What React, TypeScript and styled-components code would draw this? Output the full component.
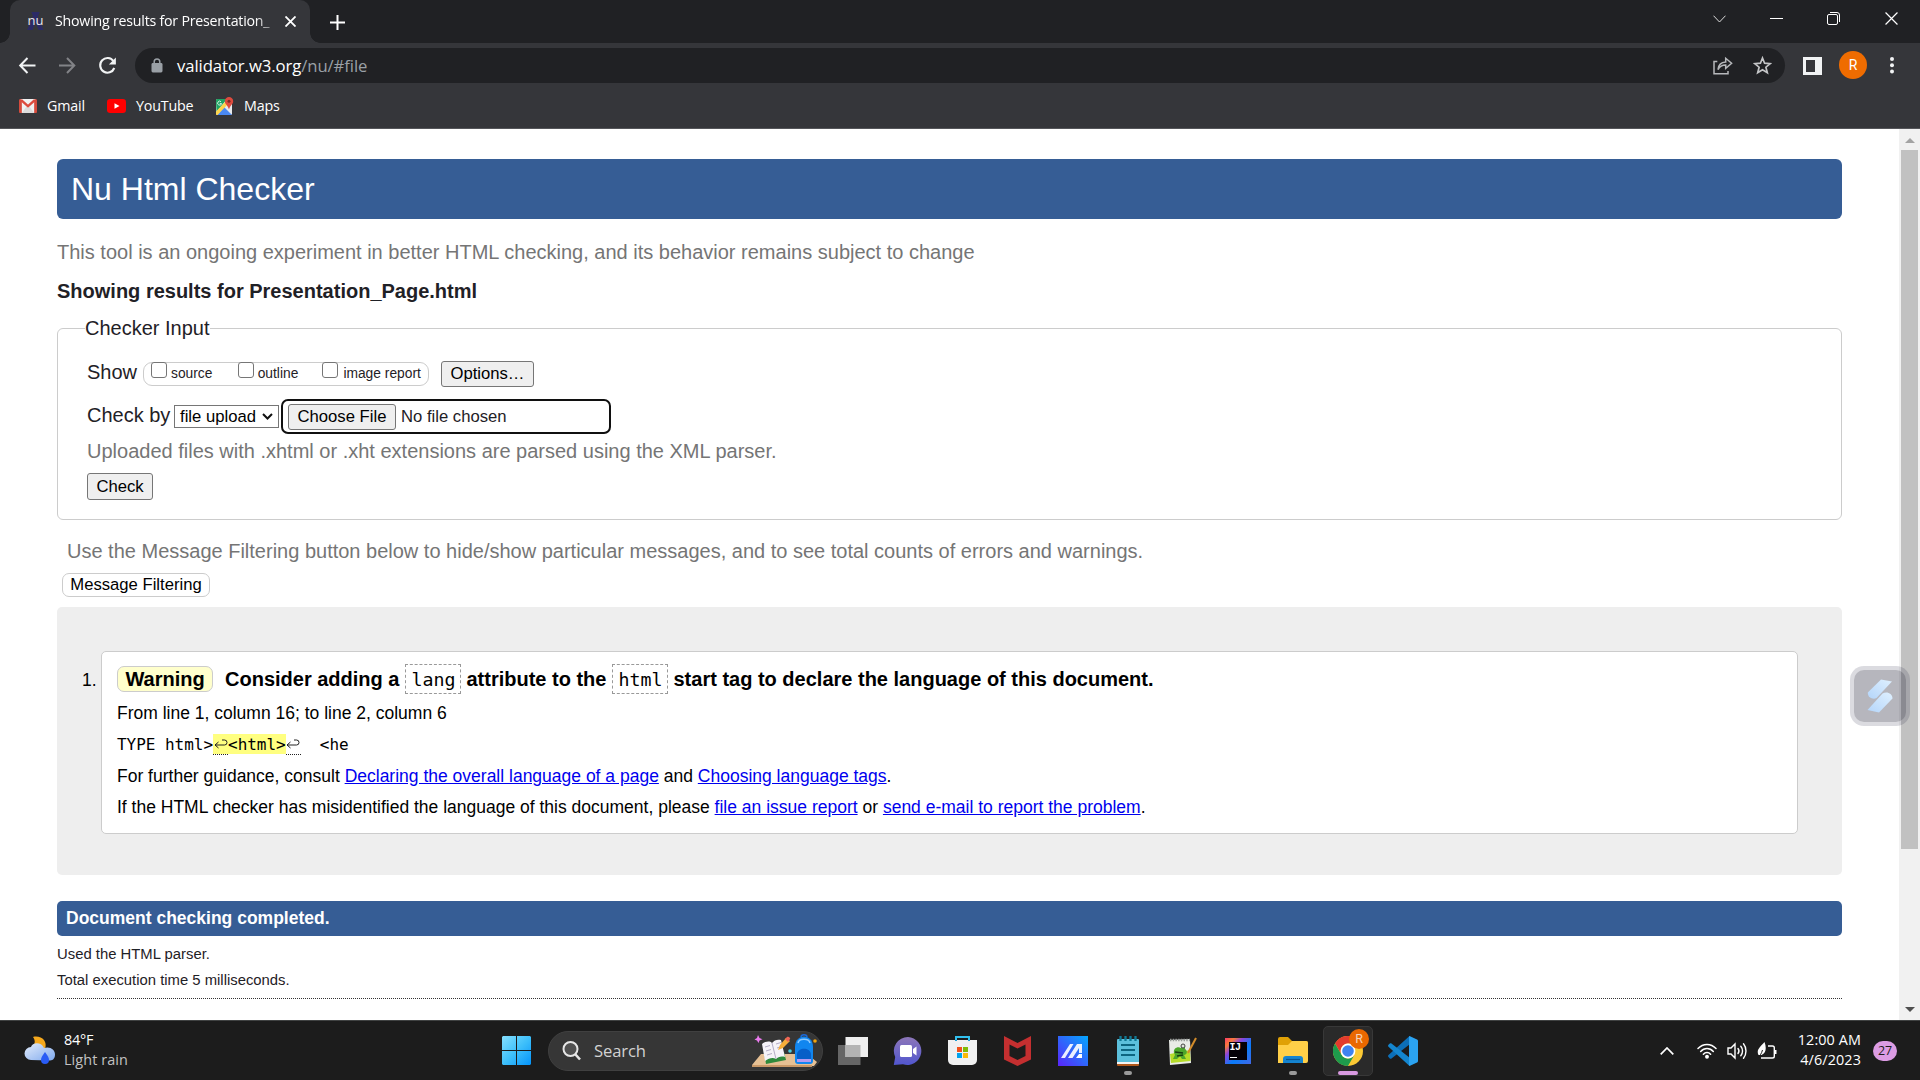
import React from "react";
import styled, { createGlobalStyle } from "styled-components";

const sans = `"Liberation Sans", Arial, sans-serif`;
const ui = `"Open Sans", "Noto Sans", sans-serif`;
const mono = `"DejaVu Sans Mono", "Liberation Mono", monospace`;

const Global = createGlobalStyle`
  * { box-sizing: border-box; }
  html, body { margin: 0; padding: 0; background: #fff; overflow: hidden; }
  svg { display: block; flex: none; }
`;

const Screen = styled.div`
  width: 1920px;
  height: 1080px;
  display: flex;
  flex-direction: column;
  overflow: hidden;
  font-family: ${sans};
`;

/* ---------- browser chrome ---------- */
const TabStrip = styled.div`
  height: 43px;
  background: #202124;
  display: flex;
  justify-content: space-between;
`;
const TabGroup = styled.div`
  display: flex;
  align-items: flex-end;
`;
const TabCurve = styled.div<{ $side: "left" | "right" }>`
  width: 10px;
  height: 10px;
  background: radial-gradient(circle at ${(p) => (p.$side === "left" ? "0 0" : "100% 0")}, #202124 9.5px, #35363a 10px);
`;
const Tab = styled.div`
  width: 300px;
  height: 43px;
  padding: 0 11px 1px 16px;
  border-radius: 10px 10px 0 0;
  background: #35363a;
  display: flex;
  align-items: center;
`;
const Favicon = styled.span`
  width: 19px;
  height: 18px;
  background: linear-gradient(112deg, transparent 30%, #2b2a66 34% 50%, transparent 54%),
    linear-gradient(68deg, transparent 46%, #2b2a66 50% 64%, transparent 68%);
  color: #e8e8e8;
  font: 500 13px/17px ${ui};
  text-align: center;
`;
const TabTitle = styled.span`
  flex: 1;
  margin-left: 10px;
  white-space: nowrap;
  color: #fff;
  font: 14.2px/20px ${ui};
  letter-spacing: -0.22px;
  mask-image: linear-gradient(90deg, #000 200px, transparent 228px);
`;
const NewTab = styled.div`
  width: 35px;
  height: 42px;
  display: grid;
  place-items: center;
`;
const WindowButtons = styled.div`
  display: flex;
  height: 37px;
`;
const WindowButton = styled.div<{ $w?: number }>`
  width: ${(p) => p.$w ?? 57}px;
  display: grid;
  place-items: center;
`;
const Toolbar = styled.div`
  height: 45px;
  background: #35363a;
  display: flex;
  align-items: center;
  padding-left: 7px;
`;
const NavButton = styled.div<{ $w?: number }>`
  width: ${(p) => p.$w ?? 40}px;
  height: 40px;
  display: grid;
  place-items: center;
`;
const Omnibox = styled.div`
  width: 1650px;
  height: 35px;
  margin-left: 8px;
  border-radius: 18px;
  background: #202124;
  display: flex;
  align-items: center;
  padding: 0 13px 0 16px;
`;
const Url = styled.span`
  flex: 1;
  margin-left: 14px;
  color: #9aa0a6;
  font: 16.7px/24px ${ui};
  letter-spacing: -0.08px;
`;
const UrlHost = styled.span`
  color: #fff;
`;
const OmniActions = styled.div`
  display: flex;
  gap: 20px;
`;
const Avatar = styled.div`
  width: 28px;
  height: 28px;
  margin: 0 6px 1px 0;
  border-radius: 50%;
  background: #ef6c00;
  color: #fff;
  font: 14px/28px Roboto, sans-serif;
  text-align: center;
`;
const Bookmarks = styled.div`
  height: 41px;
  padding: 0 0 5px 19px;
  background: #35363a;
  border-bottom: 1px solid #55565a;
  display: flex;
  align-items: center;
`;
const Bookmark = styled.div<{ $w: number }>`
  width: ${(p) => p.$w}px;
  display: flex;
  align-items: center;
  gap: 10px;
  color: #fff;
  font: 14.3px/20px ${ui};
  letter-spacing: -0.2px;
`;

/* ---------- page ---------- */
const Viewport = styled.div`
  height: 891px;
  display: flex;
  background: #fff;
`;
const Page = styled.main`
  width: 1899px;
  padding: 30px 57px 0;
  color: #1f2126;
  font-size: 20px;
  line-height: 24px;
  white-space: nowrap;
`;
const PageTitle = styled.h1`
  height: 60px;
  margin: 0;
  padding-left: 14px;
  border-radius: 6px;
  background: #365d95;
  color: #fff;
  font-size: 32px;
  font-weight: 400;
  line-height: 60px;
`;
const Hint = styled.p<{ $mt: number; $indent?: number }>`
  margin: ${(p) => p.$mt}px 0 0 ${(p) => p.$indent ?? 0}px;
  color: #757575;
`;
const ResultsFor = styled.h2`
  margin: 15px 0 0;
  font-size: 20px;
  line-height: 24px;
`;
const InputBox = styled.fieldset`
  height: 204px;
  margin: 13px 0 0;
  padding: 21px 0 0 29px;
  border: 1px solid #ccc;
  border-radius: 6px;
  min-width: 0;
`;
const Legend = styled.legend`
  margin-left: -2px;
  padding: 0;
`;
const FormRow = styled.div<{ $h: number; $mt?: number }>`
  height: ${(p) => p.$h}px;
  margin-top: ${(p) => p.$mt ?? 0}px;
  display: flex;
  align-items: center;
`;
const FormLabel = styled.span<{ $w: number; $lift: number }>`
  width: ${(p) => p.$w}px;
  padding-bottom: ${(p) => p.$lift}px;
`;
const ShowOptions = styled.div`
  width: 286px;
  height: 24px;
  border: 1px solid #ccc;
  border-radius: 9px;
  display: flex;
  align-items: center;
  padding-left: 7px;
  font-size: 13.8px;
`;
const ShowOption = styled.label<{ $w: number; $gap: number }>`
  width: ${(p) => p.$w}px;
  display: flex;
  align-items: center;
  gap: ${(p) => p.$gap}px;
`;
const CheckBox = styled.span`
  width: 16px;
  height: 16px;
  margin-bottom: 8px;
  border: 1px solid #767676;
  border-radius: 3px;
  background: #fff;
`;
const Button = styled.button<{ $w: number; $h?: number; $ml?: number }>`
  width: ${(p) => p.$w}px;
  height: ${(p) => p.$h ?? 26}px;
  margin: 0 0 0 ${(p) => p.$ml ?? 0}px;
  padding: 0;
  border: 1px solid #767676;
  border-radius: 3px;
  background: #efefef;
  color: #000;
  font: 16.67px/20px ${sans};
`;
const Select = styled.div`
  width: 105px;
  height: 23px;
  border: 1px solid #767676;
  padding: 0 5px;
  display: flex;
  align-items: center;
  justify-content: space-between;
  color: #000;
  font-size: 16.67px;
`;
const FileInput = styled.div`
  width: 330px;
  height: 35px;
  margin-left: 2px;
  padding-left: 5px;
  border: 2px solid #101010;
  border-radius: 7px;
  display: flex;
  align-items: center;
  gap: 5px;
  font-size: 16.67px;
`;
const FilterButton = styled.button`
  display: block;
  width: 148px;
  height: 24px;
  margin: 10px 0 0 5px;
  padding: 0;
  border: 1px solid #ccc;
  border-radius: 7px;
  background: #fff;
  color: #000;
  font: 16.67px/20px ${sans};
`;
const Results = styled.section`
  height: 268px;
  margin-top: 10px;
  padding: 44px 44px 0 25px;
  border-radius: 5px;
  background: #eee;
  display: flex;
  color: #000;
  font-size: 17.5px;
`;
const Ordinal = styled.span`
  width: 19px;
  padding-top: 17px;
`;
const Message = styled.article`
  flex: 1;
  height: 183px;
  padding: 12px 15px;
  border: 1px solid #ccc;
  border-radius: 5px;
  background: #fff;
`;
const MessageTitle = styled.div`
  height: 30px;
  display: flex;
  align-items: center;
  font-size: 20px;
  font-weight: 700;
`;
const WarningTag = styled.span`
  width: 96px;
  height: 26px;
  margin-right: 12px;
  border: 1px solid #ccc;
  border-radius: 7px;
  background: #ffffcc;
  text-align: center;
`;
const Code = styled.code`
  width: 56px;
  height: 30px;
  margin: 0 5px 0 6px;
  border: 1px dashed #999;
  font: 400 18.3px/29px ${mono};
  text-align: center;
`;
const MessageLine = styled.p<{ $mt: number }>`
  margin: ${(p) => p.$mt}px 0 0;
`;
const Link = styled.a`
  color: #0000ee;
  text-decoration: underline;
`;
const Extract = styled.div`
  height: 20px;
  margin: 9px 0 10px;
  display: flex;
  font: 16px/22px ${mono};
  letter-spacing: -0.03px;
  white-space: pre;
`;
const Highlight = styled.b`
  display: flex;
  font-weight: 400;
  background: #ffff80;
`;
const LineBreak = styled.span`
  width: 15px;
  height: 21px;
  border-bottom: 1px dotted #222;
  display: grid;
  place-items: center;
`;
const Completed = styled.div`
  height: 35px;
  margin: 26px 0 8px;
  padding-left: 9px;
  border-radius: 5px;
  background: #365d95;
  color: #fff;
  font-size: 17.5px;
  font-weight: 700;
  line-height: 34px;
`;
const Detail = styled.p`
  margin: 0 0 6px;
  font-size: 14.85px;
  line-height: 20px;
`;
const Rule = styled.div`
  margin-top: 8px;
  border-top: 1px dotted #333;
`;
const Scrollbar = styled.div`
  width: 21px;
  background: #f1f1f1;
  display: flex;
  flex-direction: column;
  align-items: center;
  padding: 9px 0 8px;
`;
const ScrollThumb = styled.div`
  width: 17px;
  height: 699px;
  margin: 7px 0 auto;
  background: #c1c1c1;
`;
const FloatingTool = styled.div`
  position: fixed;
  left: 1850px;
  top: 666px;
  width: 60px;
  height: 60px;
  padding: 4px;
  border-radius: 14px;
  background: rgba(16, 16, 50, 0.15);
`;
const FloatingInner = styled.div`
  width: 52px;
  height: 52px;
  border-radius: 10px;
  background: rgba(0, 0, 16, 0.17);
  display: grid;
  place-items: center;
`;

/* ---------- taskbar ---------- */
const Taskbar = styled.footer`
  height: 60px;
  background: #1c1c1c;
  border-top: 1px solid #404242;
  display: flex;
  align-items: center;
  color: #fff;
  font: 14.4px/20px ${ui};
  letter-spacing: -0.2px;
  white-space: nowrap;
`;
const Weather = styled.div`
  width: 489px;
  padding-left: 24px;
  display: flex;
  align-items: center;
  gap: 8px;
`;
const WeatherText = styled.div`
  margin-bottom: 2px;
`;
const Muted = styled.div`
  color: #c2c2c2;
  letter-spacing: 0.1px;
`;
const Slot = styled.div<{ $w?: number }>`
  width: ${(p) => p.$w ?? 55}px;
  height: 59px;
  display: grid;
  place-items: center;
`;
const RunningSlot = styled(Slot)`
  position: relative;
`;
const ActivePlate = styled.div`
  width: 50px;
  height: 50px;
  border: 1px solid #383838;
  border-radius: 5px;
  background: #2a2a2a;
  display: grid;
  place-items: center;
`;
const RunningMark = styled.div<{ $w: number; $c: string }>`
  position: absolute;
  bottom: 5px;
  left: calc(50% - ${(p) => p.$w / 2}px);
  width: ${(p) => p.$w}px;
  height: 4px;
  border-radius: 2px;
  background: ${(p) => p.$c};
`;
const ProfileBadge = styled.div`
  position: absolute;
  left: 29px;
  top: 8px;
  width: 20px;
  height: 20px;
  border-radius: 50%;
  background: #e96800;
  color: #f5d2b8;
  font: 12.5px/20px Roboto, sans-serif;
  text-align: center;
`;
const Search = styled.div`
  width: 275px;
  height: 40px;
  margin: 0 2px 0 5px;
  border: 1px solid #404040;
  border-radius: 20px;
  background: #363636;
  display: flex;
  align-items: center;
  padding: 0 4px 0 13px;
  color: #d2d2d2;
  overflow: hidden;
`;
const SearchLabel = styled.span`
  flex: 1;
  margin-left: 12px;
  font-size: 16.6px;
  letter-spacing: -0.1px;
`;
const Tray = styled.div`
  margin-left: auto;
  padding-right: 23px;
  display: flex;
  align-items: center;
`;
const TrayIcons = styled.div`
  display: flex;
  align-items: center;
  gap: 10px;
  margin: 0 20px 0 23px;
`;
const Clock = styled.div`
  width: 64px;
  margin: 0 12px 2px 0;
  text-align: right;
  letter-spacing: 0.1px;
`;
const Notices = styled.div`
  width: 24px;
  height: 20px;
  border-radius: 10px;
  background: #dc9ce4;
  color: #1c1c1c;
  font-size: 12.5px;
  text-align: center;
`;

/* ---------- icons ---------- */
const CloseX = ({ s, w }: { s: number; w: number }) => (
  <svg width={s} height={s} viewBox="0 0 12 12" stroke="#fff" strokeWidth={w} fill="none"><path d="M.5.5l11 11M11.5.5l-11 11" /></svg>
);
const Arrow = ({ flip }: { flip?: boolean }) => (
  <svg width="18" height="18" viewBox="0 0 18 18" fill="none" stroke={flip ? "#828387" : "#f1f3f4"} strokeWidth="2">
    <path d={flip ? "M1 8.500h15M9 1L16.3 8.500 9 16" : "M17.500 8.500H2.500M9.500 1L2.200 8.500 9.500 16"} />
  </svg>
);
const Reload = () => (
  <svg width="20" height="20" viewBox="0 0 20 20">
    <path d="M16.500 5.200A7.300 7.300 0 1 0 17.300 12" fill="none" stroke="#f1f3f4" strokeWidth="2.100" />
    <path d="M18.900 1.400v7h-7z" fill="#f1f3f4" />
  </svg>
);
const Lock = () => (
  <svg width="12" height="15" viewBox="0 0 12 15"><rect x=".5" y="5" width="11" height="9.5" rx="1.4" fill="#9aa0a6" /><path d="M3.2 6V3.7a2.8 2.8 0 0 1 5.6 0V6" fill="none" stroke="#9aa0a6" strokeWidth="1.5" /></svg>
);
const Share = () => (
  <svg width="20" height="19" viewBox="0 0 20 19" fill="none" stroke="#b6b8bb" strokeWidth="1.5">
    <path d="M4.300 5.500H1v12.200h14V15" />
    <path d="M5 13.600c.4-4.500 3-7.200 7.700-7.500V2.300L18.600 7.300l-5.900 5V9c-3.800 0-6 1.500-7.700 4.600z" />
  </svg>
);
const Star = () => (
  <svg width="19" height="19" viewBox="0 0 19 19" fill="none" stroke="#c4c5c7" strokeWidth="1.7">
    <path d="M9.500 2l2.100 5.200 5.600.4-4.300 3.600 1.400 5.500-4.800-3-4.800 3 1.400-5.500L1.800 7.600l5.600-.4z" />
  </svg>
);
const SidePanel = () => (
  <svg width="19" height="18" viewBox="0 0 19 18"><rect width="19" height="18" fill="#f1f3f4" /><rect x="3" y="3" width="9" height="12" fill="#35363a" /></svg>
);
const Dots = () => (
  <svg width="4" height="17" viewBox="0 0 4 17" fill="#f1f3f4"><circle cx="2" cy="2" r="2" /><circle cx="2" cy="8.200" r="2" /><circle cx="2" cy="14.400" r="2" /></svg>
);
const Gmail = () => (
  <svg width="18" height="14" viewBox="0 0 19 14" preserveAspectRatio="none">
    <rect x="1" width="17" height="14" rx="1" fill="#f1f1f1" />
    <path d="M3 14l5-6.500L9.500 9 11 7.500 16 14z" fill="#dcdcdc" />
    <path d="M2.200 1l7.300 6.200L16.800 1" fill="none" stroke="#dd4b3e" strokeWidth="2.300" />
    <path d="M0 1.500C0 .6.600 0 1.500 0L3 1.500V14H1.300C.5 14 0 13.500 0 12.700zM19 1.500C19 .6 18.400 0 17.500 0L16 1.500V14h1.700c.8 0 1.300-.5 1.300-1.300z" fill="#d54b3d" />
  </svg>
);
const YouTube = () => (
  <svg width="19" height="14" viewBox="0 0 19 14"><rect width="19" height="14" rx="3.200" fill="#f00" /><path d="M7.500 4.200v5.600l5-2.800z" fill="#fff" /></svg>
);
const Maps = () => (
  <svg width="19" height="18" viewBox="0 0 19 18">
    <rect x="1" y="2" width="16" height="16" rx="1.500" fill="#e8eaed" />
    <path d="M1 3.500C1 2.500 1.500 2 2.500 2H12L1.500 15z" fill="#1fa463" />
    <path d="M2 18L9 10l8 8z" fill="#4a89f3" />
    <path d="M1 14.500L12 3l1 4L2.500 18C1.500 18 1 17.500 1 16.500z" fill="#ffd54b" />
    <path d="M6 4.700a2 2 0 1 0 .6 1.900H4.800" fill="none" stroke="#d8f0e2" strokeWidth="1" />
    <path d="M14 0a4.200 4.200 0 0 1 4.200 4.200c0 3-3 3.800-4.200 8.300-1.200-4.500-4.200-5.300-4.200-8.300A4.200 4.200 0 0 1 14 0z" fill="#dd4b3e" />
    <circle cx="14" cy="4.200" r="1.500" fill="#7b2b25" />
  </svg>
);
const Return = () => (
  <svg width="14" height="10" viewBox="0 0 14 10" fill="none" stroke="#222" strokeWidth="1"><path d="M4.500 3L1 6l3.500 3M1 6h9.500a2.500 2.500 0 0 0 0-5H8" /></svg>
);
const ToolLogo = () => (
  <svg width="26" height="34" viewBox="0 0 26 34">
    <defs><linearGradient id="tl" x1="1" y1="0" x2="0" y2="1"><stop offset="0" stopColor="#dff0ff" /><stop offset="1" stopColor="#b4d5fa" /></linearGradient></defs>
    <path d="M14 .5L25 2.500 9.500 19C6 21 .500 18.500.800 13.500z" fill="url(#tl)" />
    <path d="M12 33.500L.5 31 15.500 14.500c4-2.500 10-.5 10 5z" fill="url(#tl)" />
  </svg>
);
const WeatherIcon = () => (
  <svg width="32" height="32" viewBox="0 0 32 32">
    <defs><linearGradient id="cl" x1="0" y1="0" x2="1" y2="1"><stop offset="0" stopColor="#e4edfb" /><stop offset="1" stopColor="#7fa9ee" /></linearGradient></defs>
    <path d="M9 2c8-2 15 4 12 12-5 2-9 2-14-1C11 10 12 6 9 2z" fill="#f6a91d" />
    <path d="M7 25a6.500 6.500 0 0 1 0-13c1-4.500 10-6 13 1 6-2 11 1.500 11 6.500S28 25.500 25 25.500z" fill="url(#cl)" />
    <path d="M21 17c3 4 4 6 4 8a4 4 0 0 1-8 0c0-2 1-4 4-8z" fill="#2a5cf5" />
  </svg>
);
const WindowsLogo = () => (
  <svg width="29" height="29" viewBox="0 0 29 29">
    <defs><linearGradient id="wl" gradientUnits="userSpaceOnUse" x1="0" y1="0" x2="29" y2="29"><stop offset="0" stopColor="#86e0ff" /><stop offset=".5" stopColor="#3fc0fa" /><stop offset="1" stopColor="#0494fb" /></linearGradient></defs>
    <path fill="url(#wl)" d="M1 0h13v14H0V1zM15 0h13l1 1v13H15zM0 15h14v14H1l-1-1zM15 15h14v13l-1 1H15z" />
  </svg>
);
const Magnifier = () => (
  <svg width="20" height="20" viewBox="0 0 20 20" fill="#505050" stroke="#e6e6e6" strokeWidth="2"><circle cx="8.500" cy="8" r="7" /><path d="M13.500 13.500l4.500 5" strokeWidth="2.600" /></svg>
);
const SearchArt = () => (
  <svg width="66" height="34" viewBox="0 0 66 34">
    <path d="M0 31L9 20h46l10 8-3 4H0z" fill="#e6c094" />
    <path d="M0 31h60v2H0z" fill="#c99867" />
    <path d="M11 12l3 18 20-4-2-8z" fill="#2f8a3c" />
    <path d="M10 10c4-3 8-3 10-1 2-3 6-4 9-3l4 17c-4-1-7 0-9 2-3-2-7-1-11 2z" fill="#f5f3f8" />
    <path d="M20 9l4 16M13 13l5-1.500M14 17l5-1.500M15 21l5-1.500M24 10l5-1.500M25 14l5-1.500" stroke="#b4adc6" strokeWidth="1" />
    <path d="M26 16l2-5 6-7 4 3-7 7z" fill="#f6ae3a" />
    <path d="M33 5l2-2c1-1 4 1 3 2l-2 3z" fill="#ee6556" />
    <path d="M6 1l1.500 3 3 1.200-3 1.300L6.500 9 5 6.500 2.500 5.500 5 4z" fill="#ec7cf0" />
    <path d="M49 3c0-3 6-3 6 0" fill="none" stroke="#1b68d8" strokeWidth="1.500" />
    <path d="M43 13c0-14 18-14 18 0v14c0 2-1 3-3 3H46c-2 0-3-1-3-3z" fill="#1186ef" />
    <path d="M46 9c1-5 11-5 12 0" fill="none" stroke="#8dcaff" strokeWidth="1.500" />
    <path d="M45 20c1-7 13-7 14 0v6c0 2-14 2-14 0z" fill="#075fc8" />
    <path d="M45 25h14v3H45z" fill="#b39af2" />
    <circle cx="38" cy="17" r="1.800" fill="#4bcbdc" /><circle cx="63" cy="7" r="1.800" fill="#f4a40b" />
  </svg>
);
const TaskView = () => (
  <svg width="30" height="28" viewBox="0 0 30 28"><rect x="0" y="8" width="22.500" height="20" fill="#666" /><rect x="7.500" width="22.500" height="20" fill="#eeeeee" /><rect x="7.500" y="8" width="15" height="12" fill="#b3b3b3" /></svg>
);
const Chat = () => (
  <svg width="30" height="30" viewBox="0 0 30 30">
    <defs><linearGradient id="ch" x1=".5" y1="0" x2=".5" y2="1"><stop offset="0" stopColor="#8d76b8" /><stop offset="1" stopColor="#5156cf" /></linearGradient></defs>
    <path d="M15 1a14 14 0 1 1-5 27.300L.8 29l1.400-8A14 14 0 0 1 15 1z" fill="url(#ch)" />
    <rect x="7" y="9" width="12" height="12" rx="1.500" fill="#fff" /><path d="M20 13l3.500-2.500v9L20 17z" fill="#fff" />
  </svg>
);
const Store = () => (
  <svg width="29" height="29" viewBox="0 0 29 29">
    <path d="M8 6V1h13v5" fill="none" stroke="#31c0ee" strokeWidth="2" />
    <path d="M0 4h29v20a5 5 0 0 1-5 5H5a5 5 0 0 1-5-5z" fill="#f0f0f0" />
    <path d="M8 5V4M21 5V4" stroke="#1c9fd4" strokeWidth="2" />
    <rect x="9" y="11" width="5" height="5" fill="#f1511b" /><rect x="15" y="11" width="5" height="5" fill="#80bb03" /><rect x="9" y="17" width="5" height="5" fill="#00a3ee" /><rect x="15" y="17" width="5" height="5" fill="#fbb907" />
  </svg>
);
const McAfee = () => (
  <svg width="27" height="30" viewBox="0 0 27 30"><path d="M0 0l13.500 7L27 0v23.500L13.500 30 0 23.500z" fill="#c42f30" /><path d="M5.500 8.500l8 4 8-4V20l-8 4-8-4z" fill="#1c1c1c" /></svg>
);
const Asus = () => (
  <svg width="30" height="30" viewBox="0 0 30 30">
    <defs><linearGradient id="as" x1="0" y1="1" x2="1" y2="0"><stop offset="0" stopColor="#5a24fb" /><stop offset=".55" stopColor="#2b6dfb" /><stop offset="1" stopColor="#03a8ff" /></linearGradient></defs>
    <rect width="30" height="30" fill="url(#as)" />
    <path d="M3 22L12 8h3.500L7 22zM10 22l9-14h5v9h-3v-5l-6.500 10z" fill="#fff" opacity=".9" /><path d="M18 22l3-4h3v4z" fill="#fff" />
  </svg>
);
const Notepad = () => (
  <svg width="22" height="30" viewBox="0 0 22 30">
    <rect y="3" width="22" height="26" rx="1" fill="#5cc0dc" /><path d="M0 26h22v2H0z" fill="#f4f4f4" /><path d="M0 28h22v1a1 1 0 0 1-1 1H1a1 1 0 0 1-1-1z" fill="#b0591d" />
    <path d="M4 9h14M4 14h14M4 19h14" stroke="#0d6580" strokeWidth="1.800" /><path d="M3.500 0v5M8.500 0v5M13.500 0v5M18.500 0v5" stroke="#107a96" strokeWidth="2.300" />
  </svg>
);
const NotepadPlus = () => (
  <svg width="29" height="28" viewBox="0 0 29 28">
    <path d="M1 3l21-1 1 24-21 2z" fill="#e9ebe7" /><path d="M2 17l20-4 .5 11L3 26z" fill="#b5dc29" />
    <path d="M2 3h20" stroke="#989c99" strokeWidth="2.500" strokeDasharray="1.500 1.200" />
    <path d="M6 16c-1-5 4-7 7-5 0-4 5-3 4 1 3 2 2 6-1 6l2 4h-4l-2-3-3 3H5l2-4z" fill="#4da62c" /><path d="M7 15l8 1M9 19l6-1" stroke="#173e10" strokeWidth="1.500" />
    <circle cx="15" cy="9" r="2" fill="#dfe5dc" stroke="#444" /><path d="M28 1L20 16" stroke="#d28b2a" strokeWidth="2" />
  </svg>
);
const IJBox = styled.div`
  width: 26px;
  height: 26px;
  padding: 4px;
  background: linear-gradient(135deg, #fe3b68, #f87a3a 18%, #8b45dc 35%, #087cfa 60%, #4268e5);
`;
const IJFace = styled.div`
  width: 18px;
  height: 18px;
  padding: 1px 0 0 1px;
  background: #050108;
  color: #fff;
  font: 700 10px/10px "Liberation Mono", monospace;
  letter-spacing: -0.5px;
`;
const IJBar = styled.div`
  width: 7px;
  height: 1px;
  margin-top: 4px;
  background: #fff;
`;
const Explorer = () => (
  <svg width="30" height="27" viewBox="0 0 30 27">
    <path d="M0 2a2 2 0 0 1 2-2h8l4 4h14a2 2 0 0 1 2 2v6H0z" fill="#e0a106" /><path d="M0 8h10l4-4h14a2 2 0 0 1 2 2v18a2 2 0 0 1-2 2H0z" fill="#ffcf48" />
    <path d="M5 22a3 3 0 0 1 3-3h14a3 3 0 0 1 3 3v4H5z" fill="#1584d0" /><path d="M8 22.500h14" stroke="#0a5592" strokeWidth="1.200" />
  </svg>
);
const Chrome = () => (
  <svg width="30" height="30" viewBox="0 0 30 30">
    <circle cx="15" cy="15" r="15" fill="#fcc934" />
    <path d="M2 7.500A15 15 0 0 1 28 7.500H15a7.500 7.500 0 0 0-6.500 11z" fill="#e33b2e" />
    <path d="M2 7.500A15 15 0 0 0 15 30l6.500-11.300A7.500 7.500 0 0 1 8.500 18.700z" fill="#1e9a4c" />
    <circle cx="15" cy="15" r="7.400" fill="#fff" /><circle cx="15" cy="15" r="5.800" fill="#3f83f0" />
  </svg>
);
const VSCode = () => (
  <svg width="30" height="30" viewBox="0 0 30 30">
    <path d="M22 8L3.500 22.500c-.6.500-1.200.4-1.700 0L.5 21c-.6-.6-.6-1.300 0-1.900L21.500 0z" fill="#0c6fb8" />
    <path d="M22 22L3.500 7.500C3 7.100 2.300 7.100 1.800 7.500L.5 8.800c-.6.600-.6 1.400 0 2L21.500 30z" fill="#1486cf" />
    <path d="M21.500 0L28.500 3.200c1 .4 1.500 1.100 1.500 2v19.600c0 .9-.5 1.600-1.500 2L21.500 30c-.4-.1-.5-.6-.5-1V1c0-.5.100-.9.500-1z" fill="#2ba3f1" />
  </svg>
);
const Wifi = () => (
  <svg width="20" height="16" viewBox="0 0 20 16" fill="none" stroke="#fff" strokeWidth="1.500" strokeLinecap="round"><path d="M1 5.500c5-5.500 13-5.500 18 0M3.700 8.500c3.500-4 9.100-4 12.600 0M6.400 11.300c2-2.300 5.200-2.300 7.200 0" /><circle cx="10" cy="13.700" r="1.200" fill="#fff" /></svg>
);
const Speaker = () => (
  <svg width="20" height="18" viewBox="0 0 20 18" fill="none" stroke="#fff" strokeWidth="1.400" strokeLinecap="round"><path d="M1 6h3l4-4v14l-4-4H1zM11 6.500c1.200 1.500 1.200 3.500 0 5M13.800 4.200c2.300 2.700 2.300 6.900 0 9.600M16.500 1.800c3.300 4 3.300 10.400 0 14.400" /></svg>
);
const Battery = () => (
  <svg width="20" height="18" viewBox="0 0 20 18">
    <path d="M11 4h4.500a1.800 1.800 0 0 1 1.800 1.800v8.400a1.800 1.800 0 0 1-1.800 1.800H4" fill="none" stroke="#fff" strokeWidth="1.400" />
    <path d="M18 8h1.500v4H18z" fill="#fff" />
    <path d="M7.500 0c2 5 2 11-3 13H1.500C-1 8 3 5 7.500 0z" fill="#fff" />
    <path d="M.5 16c2-2 4-4 5-8" stroke="#1c1c1c" fill="none" />
  </svg>
);

const taskbarApps = [TaskView, Chat, Store, McAfee, Asus];

export default function App() {
  return (
    <Screen>
      <Global />
      <TabStrip>
        <TabGroup>
          <TabCurve $side="left" />
          <Tab>
            <Favicon>nu</Favicon>
            <TabTitle>Showing results for Presentation_</TabTitle>
            <NavButton $w={18}><CloseX s={11} w={2} /></NavButton>
          </Tab>
          <TabCurve $side="right" />
          <NewTab>
            <svg width="15" height="15" viewBox="0 0 15 15" stroke="#fff" strokeWidth="2"><path d="M7.500 0v15M0 7.500h15" /></svg>
          </NewTab>
        </TabGroup>
        <WindowButtons>
          <WindowButton><svg width="13" height="8" viewBox="0 0 13 8" fill="none" stroke="#ddd" strokeWidth="1"><path d="M.5.700L6.500 7l6-6.300" /></svg></WindowButton>
          <WindowButton><svg width="13" height="1"><rect width="13" height="1" fill="#fff" /></svg></WindowButton>
          <WindowButton><svg width="13" height="13" viewBox="0 0 13 13" fill="none" stroke="#fff"><rect x=".5" y="2.500" width="10" height="10" rx="1.500" /><path d="M3 .5h7a2.500 2.500 0 0 1 2.500 2.500v7" /></svg></WindowButton>
          <WindowButton $w={58}><CloseX s={13} w={1.1} /></WindowButton>
        </WindowButtons>
      </TabStrip>
      <Toolbar>
        <NavButton><Arrow /></NavButton>
        <NavButton><Arrow flip /></NavButton>
        <NavButton><Reload /></NavButton>
        <Omnibox>
          <Lock />
          <Url><UrlHost>validator.w3.org</UrlHost>/nu/#file</Url>
          <OmniActions><Share /><Star /></OmniActions>
        </Omnibox>
        <NavButton $w={54}><SidePanel /></NavButton>
        <Avatar>R</Avatar>
        <NavButton $w={38}><Dots /></NavButton>
      </Toolbar>
      <Bookmarks>
        <Bookmark $w={88}><Gmail />Gmail</Bookmark>
        <Bookmark $w={108}><YouTube />YouTube</Bookmark>
        <Bookmark $w={80}><Maps />Maps</Bookmark>
      </Bookmarks>

      <Viewport>
        <Page>
          <PageTitle>Nu Html Checker</PageTitle>
          <Hint $mt={21}>This tool is an ongoing experiment in better HTML checking, and its behavior remains subject to change</Hint>
          <ResultsFor>Showing results for Presentation_Page.html</ResultsFor>
          <InputBox>
            <Legend>Checker Input</Legend>
            <FormRow $h={26}>
              <FormLabel $w={56} $lift={4}>Show</FormLabel>
              <ShowOptions>
                <ShowOption $w={87} $gap={4}><CheckBox />source</ShowOption>
                <ShowOption $w={85} $gap={4}><CheckBox />outline</ShowOption>
                <ShowOption $w={106} $gap={5}><CheckBox />image report</ShowOption>
              </ShowOptions>
              <Button $w={93} $ml={12}>Options…</Button>
            </FormRow>
            <FormRow $h={35} $mt={12}>
              <FormLabel $w={87} $lift={3}>Check by</FormLabel>
              <Select>
                file upload
                <svg width="11" height="7" viewBox="0 0 11 7" fill="none" stroke="#111" strokeWidth="2"><path d="M1 1l4.500 4.500L10 1" /></svg>
              </Select>
              <FileInput><Button $w={108}>Choose File</Button>No file chosen</FileInput>
            </FormRow>
            <Hint $mt={5}>Uploaded files with .xhtml or .xht extensions are parsed using the XML parser.</Hint>
            <FormRow $h={27} $mt={10}><Button $w={66} $h={27}>Check</Button></FormRow>
          </InputBox>
          <Hint $mt={19} $indent={10}>Use the Message Filtering button below to hide/show particular messages, and to see total counts of errors and warnings.</Hint>
          <FilterButton>Message Filtering</FilterButton>
          <Results>
            <Ordinal>1.</Ordinal>
            <Message>
              <MessageTitle>
                <WarningTag>Warning</WarningTag>
                Consider adding a<Code>lang</Code>attribute to the<Code>html</Code>start tag to declare the language of this document.
              </MessageTitle>
              <MessageLine $mt={7}>From line 1, column 16; to line 2, column 6</MessageLine>
              <Extract>
                {"TYPE html>"}
                <Highlight><LineBreak><Return /></LineBreak>{"<html>"}</Highlight>
                <LineBreak><Return /></LineBreak>
                {"  <he"}
              </Extract>
              <MessageLine $mt={0}>For further guidance, consult <Link>Declaring the overall language of a page</Link> and <Link>Choosing language tags</Link>.</MessageLine>
              <MessageLine $mt={7}>If the HTML checker has misidentified the language of this document, please <Link>file an issue report</Link> or <Link>send e-mail to report the problem</Link>.</MessageLine>
            </Message>
          </Results>
          <Completed>Document checking completed.</Completed>
          <Detail>Used the HTML parser.</Detail>
          <Detail>Total execution time 5 milliseconds.</Detail>
          <Rule />
        </Page>
        <Scrollbar>
          <svg width="10" height="5" viewBox="0 0 10 5"><path d="M0 5l5-5 5 5z" fill="#a3a3a3" /></svg>
          <ScrollThumb />
          <svg width="10" height="5" viewBox="0 0 10 5"><path d="M0 0l5 5 5-5z" fill="#505050" /></svg>
        </Scrollbar>
      </Viewport>
      <FloatingTool><FloatingInner><ToolLogo /></FloatingInner></FloatingTool>

      <Taskbar>
        <Weather><WeatherIcon /><WeatherText><div>84°F</div><Muted>Light rain</Muted></WeatherText></Weather>
        <Slot $w={54}><WindowsLogo /></Slot>
        <Search><Magnifier /><SearchLabel>Search</SearchLabel><SearchArt /></Search>
        {taskbarApps.map((Icon, i) => <Slot key={i}><Icon /></Slot>)}
        <RunningSlot><Notepad /><RunningMark $w={8} $c="#9a9a9a" /></RunningSlot>
        <Slot><NotepadPlus /></Slot>
        <Slot><IJBox><IJFace>IJ<IJBar /></IJFace></IJBox></Slot>
        <RunningSlot><Explorer /><RunningMark $w={8} $c="#9a9a9a" /></RunningSlot>
        <RunningSlot><ActivePlate><Chrome /></ActivePlate><ProfileBadge>R</ProfileBadge><RunningMark $w={20} $c="#d899e0" /></RunningSlot>
        <Slot><VSCode /></Slot>
        <Tray>
          <svg width="14" height="8" viewBox="0 0 14 8" fill="none" stroke="#fff" strokeWidth="1.700"><path d="M.7 7.300L7 1l6.300 6.300" /></svg>
          <TrayIcons><Wifi /><Speaker /><Battery /></TrayIcons>
          <Clock><div>12:00 AM</div><div>4/6/2023</div></Clock>
          <Notices>27</Notices>
        </Tray>
      </Taskbar>
    </Screen>
  );
}
